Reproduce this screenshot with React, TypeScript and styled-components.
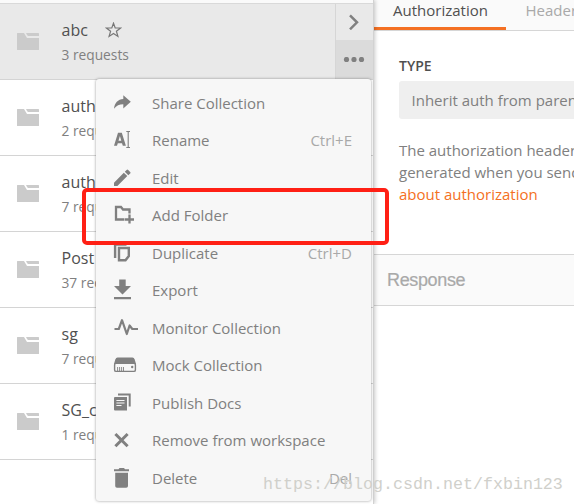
import React from "react";
import styled, { createGlobalStyle } from "styled-components";

const GlobalStyle = createGlobalStyle`
  * { box-sizing: border-box; }
  body { margin: 0; background: #fff; overflow: hidden; }
`;

const Page = styled.div`
  position: relative;
  display: flex;
  width: 574px;
  height: 504px;
  overflow: hidden;
  background: #fff;
  font-family: "Open Sans", "Noto Sans", sans-serif;
  color: #505050;
`;

const Sidebar = styled.aside`
  position: relative;
  z-index: 1;
  flex: none;
  width: 374px;
  height: 504px;
  background: #fff;
  border-right: 1px solid #d2d2d2;
  box-shadow: 1px 0 4px rgba(0, 0, 0, 0.22);
`;

const SidebarTop = styled.div`
  height: 4px;
  background: #fafafa;
  border-bottom: 1px solid #d9d9d9;
`;

const CollectionRow = styled.div<{ $active?: boolean }>`
  display: flex;
  height: 76px;
  padding-left: 17px;
  border-bottom: 1px solid #d4d4d4;
  background: ${(p) => (p.$active ? "#e9e9e9" : "#fff")};
`;

const FolderSlot = styled.div`
  width: 44.5px;
  padding-top: 28px;
  svg { display: block; }
`;

const CollectionText = styled.div`
  flex: 1;
  padding-top: 14px;
  white-space: nowrap;
`;

const CollectionName = styled.div`
  display: flex;
  align-items: flex-start;
  gap: 17px;
  height: 25px;
  font-size: 16px;
  line-height: 24px;
  color: #505050;
  svg { margin-top: 4px; }
`;

const RequestCount = styled.div`
  height: 24px;
  font-size: 13.75px;
  line-height: 24px;
  color: #808080;
`;

const RowActions = styled.div`
  width: 38px;
  height: 75px;
  border-left: 1px solid #d6d6d6;
`;

const RowAction = styled.div<{ $pressed?: boolean }>`
  display: flex;
  align-items: center;
  justify-content: center;
  height: ${(p) => (p.$pressed ? "39px" : "36px")};
  padding-right: 2px;
  background: ${(p) => (p.$pressed ? "#dbdbdb" : "#e9e9e9")};
`;

const Main = styled.main`
  flex: none;
  width: 200px;
  overflow: hidden;
  white-space: nowrap;
`;

const TabBar = styled.div`
  display: flex;
  height: 31px;
  background: #fafafa;
  border-bottom: 1px solid #d6d6d6;
`;

const Tab = styled.div<{ $active?: boolean }>`
  flex: none;
  height: 30px;
  width: 132px;
  padding-left: ${(p) => (p.$active ? "19px" : "19.5px")};
  border-bottom: ${(p) => (p.$active ? "3px solid #f47023" : "0")};
  font-size: 15px;
  line-height: 20px;
  color: ${(p) => (p.$active ? "#505050" : "#a9a9a9")};
`;

const AuthPanel = styled.section`
  height: 223px;
  padding: 24px 0 0 25px;
`;

const FieldLabel = styled.div`
  height: 26px;
  font-size: 14px;
  line-height: 22px;
  font-weight: 600;
  color: #505050;
`;

const Select = styled.div`
  width: 240px;
  height: 38px;
  padding-left: 12.5px;
  border-radius: 3px;
  background: #efefef;
  font-size: 15px;
  line-height: 38px;
  color: #808080;
`;

const Description = styled.div`
  padding-top: 20px;
  font-size: 15px;
  line-height: 22px;
  color: #808080;
`;

const Link = styled.a`
  color: #f47023;
`;

const ResponseHeader = styled.div`
  height: 52px;
  padding-left: 13px;
  border-top: 1px solid #d6d6d6;
  border-bottom: 1px solid #d6d6d6;
  background: #fafafa;
  font-family: "Liberation Sans", Arial, sans-serif;
  font-size: 18px;
  letter-spacing: -0.35px;
  line-height: 51px;
  color: #a9a9a9;
  -webkit-text-stroke: 0.2px #a9a9a9;
`;

const Menu = styled.div`
  position: absolute;
  z-index: 2;
  left: 96px;
  top: 79px;
  width: 275px;
  height: 422px;
  padding: 5px 0 4px;
  border-radius: 3px;
  background: #f7f7f7;
  box-shadow: 0 0 3px rgba(0, 0, 0, 0.4);
`;

const MenuItem = styled.div`
  display: flex;
  align-items: center;
  height: 37.5px;
  padding: 0 19px 0 18px;
  font-size: 15px;
  color: #808080;
  white-space: nowrap;
`;

const MenuIcon = styled.span`
  width: 38px;
  height: 24px;
  svg { display: block; overflow: visible; }
`;

const Shortcut = styled.span`
  margin-left: auto;
  color: #a9a9a9;
`;

const Highlight = styled.div`
  position: absolute;
  z-index: 3;
  left: 82px;
  top: 188px;
  width: 307px;
  height: 57px;
  border: 4px solid #ff2015;
  border-radius: 5px;
`;

const Watermark = styled.div`
  position: absolute;
  z-index: 4;
  left: 263px;
  top: 474px;
  font-family: "Liberation Mono", monospace;
  font-size: 16.67px;
  line-height: 22px;
  color: #d0d0cb;
`;

const Folder = () => (
  <svg width="22" height="18" viewBox="0 0 22 18" fill="#cbcbcb">
    <path d="M0 1.5 Q0 1 .5 1H7L10 6H22V17.5Q22 18 21.5 18H.5Q0 18 0 17.5Z" />
    <path d="M9 1H21.5Q22 1 22 1.5V4H11Q10.3 4 9 1Z" />
  </svg>
);

const Star = () => (
  <svg width="17" height="16" viewBox="0 0 17 16" fill="none" stroke="#777" strokeWidth="1.2">
    <path d="M8.5 1.2 10.2 6H15.6L11.4 9.2 12.9 14.4 8.5 11.4 4.1 14.4 5.6 9.2 1.4 6H6.8Z" />
  </svg>
);

const Chevron = () => (
  <svg width="12" height="16" viewBox="0 0 12 16" fill="none" stroke="#808080" strokeWidth="2.5">
    <path d="M2 1.3 9 8.3 2 15.3" />
  </svg>
);

const Dots = () => (
  <svg width="22" height="6" viewBox="0 0 22 6" fill="#808080">
    <circle cx="3.5" cy="2.5" r="2.6" />
    <circle cx="11" cy="2.5" r="2.6" />
    <circle cx="18.5" cy="2.5" r="2.6" />
  </svg>
);

const icons: Record<string, React.ReactNode> = {
  share: <path d="M0 17.8C.5 12 4 8.2 9.3 8V4.2L16.8 10.8 9.3 17.4V13.2C5.3 13.2 2.5 14.5 0 17.8Z" />,
  rename: (
    <>
      <path fillRule="evenodd" d="M4 4.7H7.8L11.9 17.8H8.8L8 15.2H3.8L3 17.8H0ZM4.5 12.7H7.3L5.9 8Z" />
      <path d="M12.3 3.5H16M12.3 19.5H16M14.2 3.5V19.5" fill="none" stroke="#808080" strokeWidth="1.1" />
    </>
  ),
  edit: (
    <path d="M0 16.7V20H3.4L13.3 10.1 9.8 6.7ZM10.8 5.7 12.6 3.9Q13.4 3.1 14.2 3.9L16.2 5.9Q17 6.7 16.2 7.5L14.3 9.3Z" />
  ),
  folder: (
    <path
      d="M10.5 16.5H2V4H7L9 6.5H15.5V10.5M15.5 11.5V20.5M11 16.5H20"
      fill="none"
      stroke="#808080"
      strokeWidth="2.3"
    />
  ),
  duplicate: (
    <path d="M1.1 17V3.5H12.5M5 7H14.8V15L11.5 19.2H5Z" fill="none" stroke="#808080" strokeWidth="2.4" />
  ),
  export: <path d="M5.2 1.5H11.7V8H17L8.5 16.5 0 8H5.2ZM0 19H17V21.2H0Z" />,
  monitor: (
    <path
      d="M.5 13H4.8L8 4.2 12.8 18 15.6 9.5 18.3 13H24"
      fill="none"
      stroke="#808080"
      strokeWidth="2.2"
      strokeLinejoin="round"
    />
  ),
  mock: (
    <>
      <path d="M3.5 4.5H18.5Q20 4.5 20.7 6.5L22 11H0L1.3 6.5Q2 4.5 3.5 4.5Z" />
      <rect x=".6" y="10.2" width="20.8" height="8.2" rx="1.5" fill="none" stroke="#808080" strokeWidth="1.4" />
      <path d="M3.6 14V18M5.6 14V18M7.6 14V18M9.5 14V18" stroke="#808080" strokeWidth=".9" />
      <circle cx="18.2" cy="14" r="1.2" />
    </>
  ),
  docs: (
    <>
      <path d="M4 3.5H15.7V15.5" fill="none" stroke="#808080" strokeWidth="2" />
      <path d="M1 6H13V19.5H1Q0 19.5 0 18.5V7Q0 6 1 6Z" />
      <path d="M2.4 9.5H10.5M2.4 12H10.5M2.4 14.5H7.5" stroke="#f7f7f7" strokeWidth="1.1" />
    </>
  ),
  remove: <path d="M1.4 6 13.6 18.2M13.6 6 1.4 18.2" fill="none" stroke="#808080" strokeWidth="3" />,
  trash: <path d="M0 3.2H4.5L5.5 2H10L11 3.2H15V5.2H0ZM1.2 6.7H14V20Q14 21.8 12.2 21.8H3Q1.2 21.8 1.2 20Z" />,
};

const menuItems = [
  { icon: "share", label: "Share Collection" },
  { icon: "rename", label: "Rename", shortcut: "Ctrl+E" },
  { icon: "edit", label: "Edit" },
  { icon: "folder", label: "Add Folder" },
  { icon: "duplicate", label: "Duplicate", shortcut: "Ctrl+D" },
  { icon: "export", label: "Export" },
  { icon: "monitor", label: "Monitor Collection" },
  { icon: "mock", label: "Mock Collection" },
  { icon: "docs", label: "Publish Docs" },
  { icon: "remove", label: "Remove from workspace" },
  { icon: "trash", label: "Delete", shortcut: "Del" },
];

const collections = [
  { name: "abc", count: "3 requests", active: true },
  { name: "auth", count: "2 requests" },
  { name: "auth", count: "7 requests" },
  { name: "Post", count: "37 requests" },
  { name: "sg", count: "7 requests" },
  { name: "SG_c", count: "1 requests" },
];

export default function App() {
  return (
    <Page>
      <GlobalStyle />
      <Sidebar>
        <SidebarTop />
        {collections.map((c, i) => (
          <CollectionRow key={i} $active={c.active}>
            <FolderSlot>
              <Folder />
            </FolderSlot>
            <CollectionText>
              <CollectionName>
                {c.name}
                {c.active && <Star />}
              </CollectionName>
              <RequestCount>{c.count}</RequestCount>
            </CollectionText>
            {c.active && (
              <RowActions>
                <RowAction>
                  <Chevron />
                </RowAction>
                <RowAction $pressed>
                  <Dots />
                </RowAction>
              </RowActions>
            )}
          </CollectionRow>
        ))}
      </Sidebar>
      <Main>
        <TabBar>
          <Tab $active>Authorization</Tab>
          <Tab>Headers</Tab>
        </TabBar>
        <AuthPanel>
          <FieldLabel>TYPE</FieldLabel>
          <Select>Inherit auth from parent</Select>
          <Description>
            The authorization header
            <br />
            generated when you send
            <br />
            <Link>about authorization</Link>
          </Description>
        </AuthPanel>
        <ResponseHeader>Response</ResponseHeader>
      </Main>
      <Menu>
        {menuItems.map((m) => (
          <MenuItem key={m.label}>
            <MenuIcon>
              <svg width="24" height="24" viewBox="0 0 24 24" fill="#808080">
                {icons[m.icon]}
              </svg>
            </MenuIcon>
            {m.label}
            {m.shortcut && <Shortcut>{m.shortcut}</Shortcut>}
          </MenuItem>
        ))}
      </Menu>
      <Highlight />
      <Watermark>https://blog.csdn.net/fxbin123</Watermark>
    </Page>
  );
}
